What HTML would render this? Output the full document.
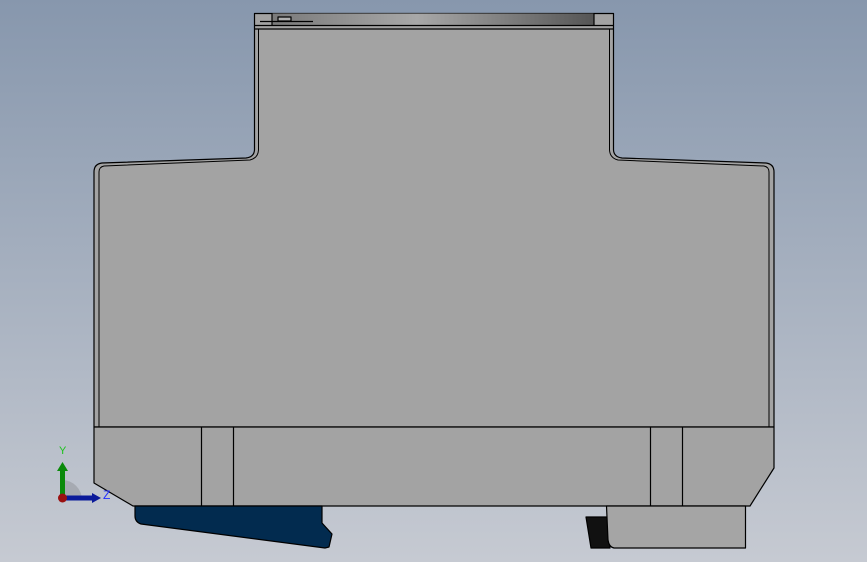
<!DOCTYPE html>
<html><head><style>
html,body{margin:0;padding:0;width:867px;height:562px;overflow:hidden;}
body{background:linear-gradient(#8797ad,#c6cad2);}
svg{display:block}
</style></head><body>
<svg width="867" height="562" viewBox="0 0 867 562" xmlns="http://www.w3.org/2000/svg">
<defs>
<linearGradient id="cap" x1="0" x2="1">
<stop offset="0" stop-color="#7a7a7a"/><stop offset="0.45" stop-color="#a8a8a8"/><stop offset="1" stop-color="#555"/>
</linearGradient>
</defs>
<g stroke="#000" stroke-width="1.2" stroke-linejoin="round">
<!-- main outline -->
<path d="M254.5 13.5 H613.5 V150 Q614 157 622 158 L766 163 Q774 164 774 172 V427 H94 V172 Q94 164 102 163 L246 158 Q254 157 254.5 150 Z" fill="#a3a3a3"/>
<!-- cap strip -->
<rect x="272" y="13.5" width="322" height="12" fill="url(#cap)" stroke="none"/>
<line x1="254" y1="25.5" x2="614" y2="25.5"/>
<line x1="254" y1="29" x2="614" y2="29"/>
<line x1="272" y1="13.5" x2="272" y2="25.5"/>
<line x1="594" y1="13.5" x2="594" y2="25.5"/>
<rect x="278" y="17" width="13" height="4" fill="#b0b0b0"/>
<line x1="260" y1="21.5" x2="313" y2="21.5"/>
<!-- inner wall lines -->
<path d="M258.5 29 V150 Q258 158 250 160 L104 166 Q99 167 99 172 V427" fill="none" stroke-width="1"/>
<path d="M609.5 29 V150 Q610 158 618 160 L764 166 Q769 167 769 172 V427" fill="none" stroke-width="1"/>
<!-- base section -->
<path d="M94 427 H774 V468 L750 506 H133 L94 483 Z" fill="#a3a3a3"/>
<line x1="201.5" y1="427" x2="201.5" y2="506"/>
<line x1="233.5" y1="427" x2="233.5" y2="506"/>
<line x1="650.5" y1="427" x2="650.5" y2="506"/>
<line x1="682.5" y1="427" x2="682.5" y2="506"/>
<!-- blue foot -->
<path d="M135 506 H322 V523 L332 534 L329 547 L325 548 L141 524 Q135 522 135 516 Z" fill="#022b4f"/>
<!-- black piece -->
<path d="M586 517 H607 L610 548 H591 Z" fill="#111"/>
<!-- right foot -->
<path d="M606.5 506 H745.5 V548 H614 Q609 547 608 540 Z" fill="#a5a5a5"/>
</g>
<!-- axis triad -->
<path d="M62 480 A20 20 0 0 1 82 500 H62 Z" fill="#a0a4ab" opacity="0.8"/>
<rect x="60" y="470" width="5" height="30" fill="#0a8a0a"/>
<polygon points="57,471 62.5,462 68,471" fill="#0a8a0a"/>
<rect x="62" y="495.5" width="30" height="5" fill="#0a1a9a"/>
<polygon points="92,493 101,498 92,503" fill="#0a1a9a"/>
<circle cx="62.5" cy="498" r="4.5" fill="#9a1010"/>
<text x="59" y="454" font-family="Liberation Sans, sans-serif" font-size="11" fill="#1cc21c">Y</text>
<text x="103" y="499" font-family="Liberation Sans, sans-serif" font-size="12" fill="#2030ff">Z</text>
</svg>
</body></html>
